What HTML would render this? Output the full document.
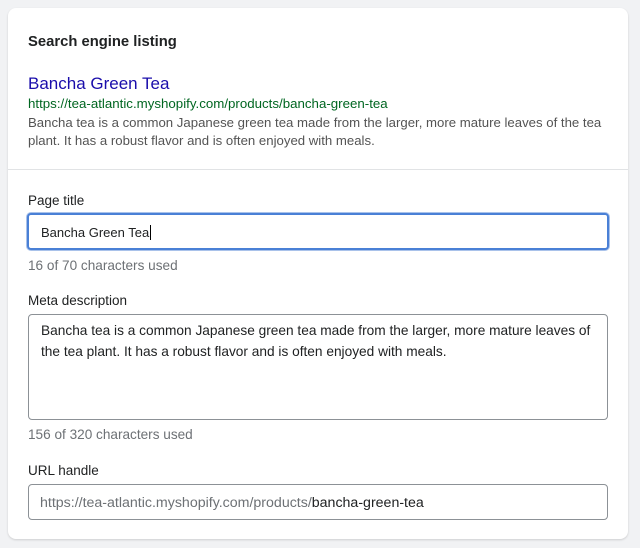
<!DOCTYPE html>
<html><head><style>
*{box-sizing:border-box;margin:0;padding:0}
body{width:640px;height:548px;background:#f1f2f4;font-family:"Liberation Sans",sans-serif;color:#202223;position:relative;overflow:hidden}
.card{position:absolute;left:8px;top:8px;width:620px;height:531px;background:#fff;border-radius:8px;box-shadow:0 1px 2px rgba(0,0,0,.15)}
.t{position:absolute;left:28px;white-space:nowrap;line-height:18px}
.box{position:absolute;left:28px;width:580px;border:1px solid #8c9196;border-radius:4px;background:#fff}
</style></head><body>
<div class="card"></div>
<div class="t" style="top:33px;font-size:14.8px;font-weight:bold">Search engine listing</div>
<div class="t" style="top:73px;font-size:17px;line-height:22px;color:#1a0dab">Bancha Green Tea</div>
<div class="t" style="top:95px;font-size:13.3px;color:#006621">https://tea-atlantic.myshopify.com/products/bancha-green-tea</div>
<div class="t" style="top:114px;font-size:13.2px;color:#545454">Bancha tea is a common Japanese green tea made from the larger, more mature leaves of the tea</div>
<div class="t" style="top:132px;font-size:13.2px;color:#545454">plant. It has a robust flavor and is often enjoyed with meals.</div>
<div style="position:absolute;left:8px;top:169px;width:620px;height:1px;background:#e1e3e5"></div>
<div class="t" style="top:192px;font-size:13.5px">Page title</div>
<div class="box" style="top:213px;height:37px;left:27px;width:582px;border:2px solid #4a80d6;box-shadow:0 0 0 1px #a9c2ea"></div>
<div class="t" style="top:224px;left:41px;font-size:13px">Bancha Green Tea<span style="border-left:1px solid #000;margin-left:1px"></span></div>
<div class="t" style="top:257px;font-size:13.6px;color:#6d7175">16 of 70 characters used</div>
<div class="t" style="top:292px;font-size:13.5px">Meta description</div>
<div class="box" style="top:314px;height:106px"></div>
<div class="t" style="top:322px;left:41px;font-size:13.7px">Bancha tea is a common Japanese green tea made from the larger, more mature leaves of</div>
<div class="t" style="top:343px;left:41px;font-size:13.7px">the tea plant. It has a robust flavor and is often enjoyed with meals.</div>
<div class="t" style="top:426px;font-size:13.6px;color:#6d7175">156 of 320 characters used</div>
<div class="t" style="top:462px;font-size:13.5px">URL handle</div>
<div class="box" style="top:484px;height:36px"></div>
<div class="t" style="top:494px;left:40px;font-size:14.2px;color:#6d7175">https://tea-atlantic.myshopify.com/products/<span style="color:#202223">bancha-green-tea</span></div>
</body></html>
